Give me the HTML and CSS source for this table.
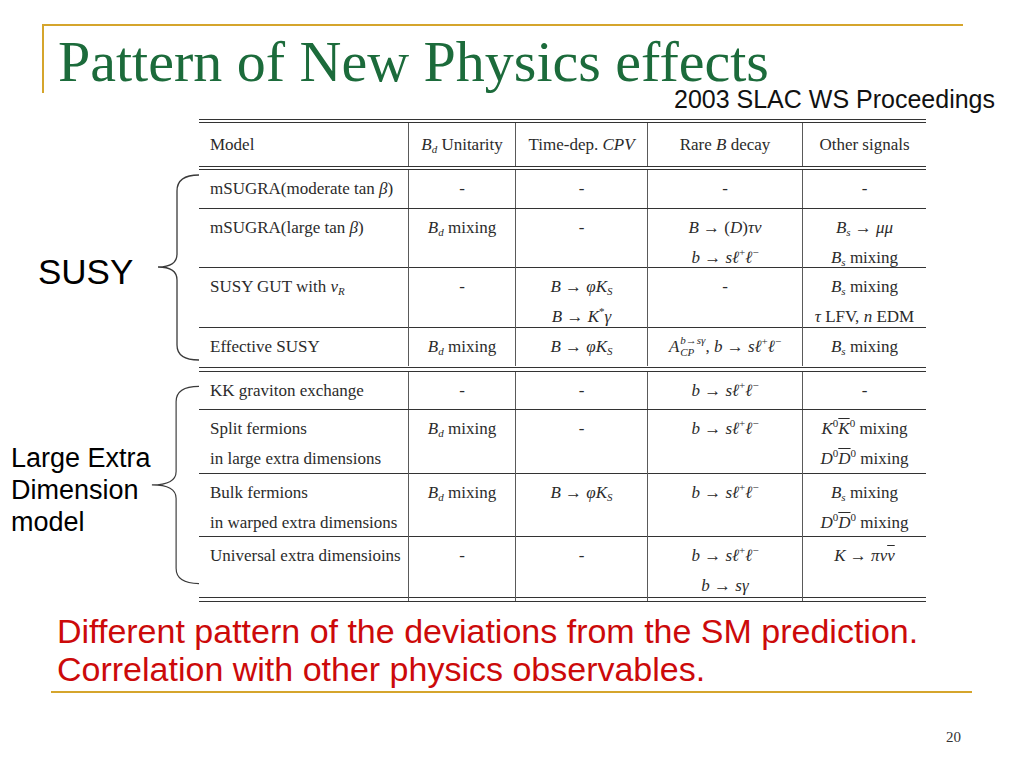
FILE: index.html
```html
<!DOCTYPE html>
<html>
<head>
<meta charset="utf-8">
<title>Pattern of New Physics effects</title>
<link rel="stylesheet" href="styles.css">
</head>
<body>
<div class="slide">
  <header class="head">
    <div class="title-frame"><h1 class="title">Pattern of New Physics effects</h1></div>
    <div class="source">2003 SLAC WS Proceedings</div>
  </header>

  <section class="table">
    <div class="dbl"></div>
    <div class="row hdr">
      <div class="c">Model</div>
      <div class="c"><i>B<sub>d</sub></i> Unitarity</div>
      <div class="c">Time-dep. <i>CPV</i></div>
      <div class="c">Rare <i>B</i> decay</div>
      <div class="c">Other signals</div>
    </div>
    <div class="dbl"></div>

    <div class="group">
      <div class="side side-susy">
        <span class="label-susy">SUSY</span>
        <svg class="brace" width="42" height="197" viewBox="0 0 42 197">
          <path d="M42,5 C29,5 20,9 20,21 L20,84 C20,93 13,97 1,97 C13,97 20,101 20,110 L20,175 C20,186 29,190 42,190" />
        </svg>
      </div>
      <div class="rows">
        <div class="row h39">
          <div class="c">mSUGRA(moderate tan <i>β</i>)</div>
          <div class="c">-</div>
          <div class="c">-</div>
          <div class="c">-</div>
          <div class="c">-</div>
        </div>
        <div class="row h58">
          <div class="c">mSUGRA(large tan <i>β</i>)</div>
          <div class="c"><i>B<sub>d</sub></i> mixing</div>
          <div class="c">-</div>
          <div class="c"><i>B</i> → (<i>D</i>)<i>τν</i><br><i>b</i> → <i>sℓ</i><sup>+</sup><i>ℓ</i><sup>−</sup></div>
          <div class="c"><i>B<sub>s</sub></i> → <i>μμ</i><br><i>B<sub>s</sub></i> mixing</div>
        </div>
        <div class="row h59">
          <div class="c">SUSY GUT with <i>ν<sub>R</sub></i></div>
          <div class="c">-</div>
          <div class="c"><i>B</i> → <i>φK<sub>S</sub></i><br><i>B</i> → <i>K</i><sup>*</sup><i>γ</i></div>
          <div class="c">-</div>
          <div class="c"><i>B<sub>s</sub></i> mixing<br><i>τ</i> LFV, <i>n</i> EDM</div>
        </div>
        <div class="row h38">
          <div class="c">Effective SUSY</div>
          <div class="c"><i>B<sub>d</sub></i> mixing</div>
          <div class="c"><i>B</i> → <i>φK<sub>S</sub></i></div>
          <div class="c"><i>A</i><span class="stk"><span class="stk-up">b→sγ</span><span class="stk-dn">CP</span></span>, <i>b</i> → <i>sℓ</i><sup>+</sup><i>ℓ</i><sup>−</sup></div>
          <div class="c"><i>B<sub>s</sub></i> mixing</div>
        </div>
      </div>
    </div>

    <div class="dbl dbl-wide"></div>

    <div class="group">
      <div class="side side-led">
        <span class="label-led">Large Extra<br>Dimension<br>model</span>
        <svg class="brace" width="54" height="225" viewBox="0 0 54 225">
          <path d="M54,3 C38,3 28,8 28,20 L28,98 C28,108 19,113 1,113 C19,113 28,118 28,128 L28,206 C28,218 38,223 54,223" />
        </svg>
      </div>
      <div class="rows">
        <div class="row h38">
          <div class="c">KK graviton exchange</div>
          <div class="c">-</div>
          <div class="c">-</div>
          <div class="c"><i>b</i> → <i>sℓ</i><sup>+</sup><i>ℓ</i><sup>−</sup></div>
          <div class="c">-</div>
        </div>
        <div class="row h63">
          <div class="c">Split fermions<br>in large extra dimensions</div>
          <div class="c"><i>B<sub>d</sub></i> mixing</div>
          <div class="c">-</div>
          <div class="c"><i>b</i> → <i>sℓ</i><sup>+</sup><i>ℓ</i><sup>−</sup></div>
          <div class="c"><i>K</i><sup>0</sup><i class="ov">K</i><sup>0</sup> mixing<br><i>D</i><sup>0</sup><i class="ov">D</i><sup>0</sup> mixing</div>
        </div>
        <div class="row h62">
          <div class="c">Bulk fermions<br>in warped extra dimensions</div>
          <div class="c"><i>B<sub>d</sub></i> mixing</div>
          <div class="c"><i>B</i> → <i>φK<sub>S</sub></i></div>
          <div class="c"><i>b</i> → <i>sℓ</i><sup>+</sup><i>ℓ</i><sup>−</sup></div>
          <div class="c"><i>B<sub>s</sub></i> mixing<br><i>D</i><sup>0</sup><i class="ov">D</i><sup>0</sup> mixing</div>
        </div>
        <div class="row h59">
          <div class="c">Universal extra dimensioins</div>
          <div class="c">-</div>
          <div class="c">-</div>
          <div class="c"><i>b</i> → <i>sℓ</i><sup>+</sup><i>ℓ</i><sup>−</sup><br><i>b</i> → <i>sγ</i></div>
          <div class="c"><i>K</i> → <i>πν</i><i class="ov">ν</i></div>
        </div>
      </div>
    </div>

    <div class="dbl dbl-wide"></div>
  </section>

  <div class="notes">
    <p>Different pattern of the deviations from the SM prediction.</p>
    <p>Correlation with other physics observables.</p>
  </div>
  <div class="gold-rule"></div>
  <div class="pagenum">20</div>
</div>
</body>
</html>
```

FILE: styles.css
```css
* { box-sizing: border-box; }

body {
  margin: 0;
  background: #ffffff;
}

.slide {
  width: 1024px;
  height: 768px;
  overflow: hidden;
  background: #ffffff;
  font-family: "Liberation Serif", "DejaVu Serif", serif;
}

/* ---------- header ---------- */
.head {
  padding-top: 24px;
}

.title-frame {
  margin-left: 42px;
  width: 921px;
  height: 69px;
  border-top: 2px solid #d5a52c;
  border-left: 2px solid #d5a52c;
  padding-left: 14px;
  padding-top: 13px;
}

.title {
  margin: 0;
  font-family: "Liberation Serif", "DejaVu Serif", serif;
  font-weight: normal;
  font-size: 58px;
  line-height: 46px;
  color: #1c6b3b;
  white-space: nowrap;
}

.source {
  margin-top: -6px;
  margin-right: 29px;
  text-align: right;
  font-family: "Liberation Sans", Arial, sans-serif;
  font-size: 25px;
  line-height: 24px;
  color: #111111;
}

/* ---------- table ---------- */
.table {
  margin-top: 8px;
  width: 926px;
}

.dbl {
  margin-left: 199px;
  width: 727px;
  height: 4px;
  border-top: 1px solid #333333;
  border-bottom: 1px solid #333333;
}

.dbl-wide {
  height: 5px;
}

.row {
  display: grid;
  grid-template-columns: 209px 107px 132px 155px 124px;
}

.hdr {
  margin-left: 199px;
  height: 43px;
}

.c {
  border-left: 1px solid #5a5a5a;
  text-align: center;
  padding-top: 4px;
  font-size: 17px;
  line-height: 30px;
  color: #2b2b2b;
  white-space: nowrap;
}

.c:first-child {
  border-left: none;
  text-align: left;
  padding-left: 11px;
}

.hdr .c {
  padding-top: 0;
  line-height: 43px;
}

.c i {
  font-style: italic;
}

.c sub,
.c sup {
  font-size: 11px;
  line-height: 0;
}

.c sub {
  vertical-align: -3px;
}

.c sup {
  vertical-align: 7px;
}

.ov {
  text-decoration: overline;
}

.stk {
  display: inline-flex;
  flex-direction: column;
  vertical-align: 8px;
  font-size: 11px;
  line-height: 12px;
  font-style: italic;
  text-align: left;
  margin-left: 1px;
}

.group {
  display: flex;
}

.side {
  width: 199px;
  flex: none;
  display: flex;
  align-items: center;
  justify-content: space-between;
}

.brace {
  display: block;
  align-self: flex-start;
}

.brace path {
  fill: none;
  stroke: #3a3a3a;
  stroke-width: 1.3;
}

.label-susy {
  margin-left: 38px;
  padding-top: 6px;
  font-family: "Liberation Sans", Arial, sans-serif;
  font-size: 35px;
  line-height: 40px;
  color: #000000;
}

.label-led {
  margin-left: 11px;
  padding-top: 10px;
  font-family: "Liberation Sans", Arial, sans-serif;
  font-size: 27px;
  line-height: 32px;
  color: #000000;
  white-space: nowrap;
}

.rows {
  width: 727px;
}

.rows .row {
  border-bottom: 1px solid #333333;
}

.rows .row:last-child {
  border-bottom: none;
}

.h38 { height: 38px; }
.h39 { height: 39px; }
.h58 { height: 59px; }
.h59 { height: 60px; }
.h62 { height: 63px; }
.h63 { height: 64px; }

/* ---------- notes ---------- */
.notes {
  margin-top: 10px;
  padding-left: 57px;
  font-family: "Liberation Sans", Arial, sans-serif;
  font-size: 34px;
  line-height: 38px;
  color: #cc0a0a;
}

.notes p {
  margin: 0;
  white-space: nowrap;
}

.gold-rule {
  margin-top: 3px;
  margin-left: 51px;
  width: 921px;
  height: 2px;
  background: #d5a52c;
}

.pagenum {
  margin-top: 36px;
  padding-right: 63px;
  text-align: right;
  font-family: "Liberation Serif", serif;
  font-size: 15px;
  line-height: 16px;
  color: #333333;
}
```
